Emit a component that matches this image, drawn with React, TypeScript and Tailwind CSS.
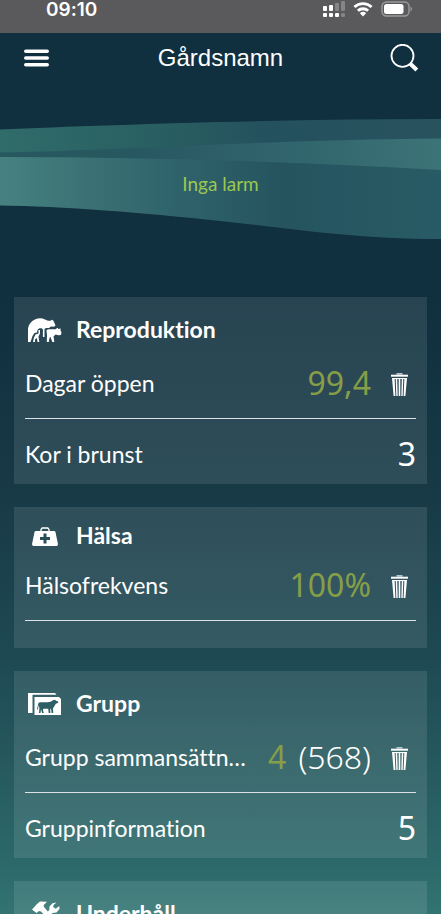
import type { ReactNode } from "react";

function StatusBar() {
  return (
    <div className="flex h-[33px] shrink-0 items-start justify-between bg-[#5a5a5c] pl-[46px] pr-7">
      <span className="font-['Inter',sans-serif] text-[19px] leading-5 font-semibold">09:10</span>
      <div className="flex items-center gap-2 pt-px">
        <svg className="h-4 w-[23px]" viewBox="0 0 23 16" fill="#fff" aria-hidden="true">
          <rect x="1" y="5" width="4" height="5" rx="1" />
          <rect x="7" y="4" width="4" height="6" rx="1" />
          <rect x="13" y="2" width="4" height="8" rx="1" fill="#858587" />
          <rect x="19" y="0" width="4" height="10" rx="1" fill="#858587" />
          <rect x="1" y="12" width="4" height="4" rx="1" />
          <rect x="7" y="12" width="4" height="4" rx="1" />
          <rect x="13" y="12" width="4" height="4" rx="1" />
          <rect x="19" y="12" width="4" height="4" rx="1.5" fill="#858587" />
        </svg>
        <svg className="h-4 w-5" viewBox="0 0 20 16" fill="none" stroke="#fff" strokeWidth="2.8" aria-hidden="true">
          <path d="M1.4 6.1a12.4 12.4 0 0 1 17.2 0" />
          <path d="M4.9 9.8a7.4 7.4 0 0 1 10.2 0" />
          <path d="M10 15.6 6.9 12.3a4.5 4.5 0 0 1 6.2 0z" fill="#fff" stroke="none" />
        </svg>
        <svg className="h-4 w-8" viewBox="0 0 32 16" aria-hidden="true">
          <rect x="1" y="1" width="27" height="14" rx="4.5" fill="none" stroke="#9b9b9d" strokeWidth="1.4" />
          <rect x="3" y="3" width="19.500" height="10" rx="2.500" fill="#fff" />
          <path d="M29.500 5.500c2 .8 2 4.200 0 5z" fill="#9b9b9d" />
        </svg>
      </div>
    </div>
  );
}

function Header() {
  return (
    <header className="flex h-[50px] shrink-0 items-center justify-between pr-[22px] pl-6">
      <button type="button" aria-label="Meny" className="w-[30px]">
        <svg className="h-[18px] w-[25px]" viewBox="0 0 25 18" stroke="#fff" strokeWidth="3.600" strokeLinecap="round">
          <path d="M1.800 2.200h21.400M1.800 9h21.400M1.800 15.800h21.400" />
        </svg>
      </button>
      <h1 className="font-['Liberation_Sans',sans-serif] text-[24px] leading-8">Gårdsnamn</h1>
      <button type="button" aria-label="Sök" className="w-8">
        <svg className="h-7 w-8" viewBox="0 0 32 28" fill="none" stroke="#fff">
          <circle cx="15.500" cy="11.800" r="11" strokeWidth="1.800" />
          <path d="M23 19.500l6.800 6.500" strokeWidth="4" />
        </svg>
      </button>
    </header>
  );
}

function Waves() {
  return (
    <svg className="col-start-1 row-start-1 h-[122px] w-full self-start" viewBox="0 0 441 122" preserveAspectRatio="none" aria-hidden="true">
      <defs>
        <linearGradient id="ridge">
          <stop offset="0" stopColor="#306c6a" />
          <stop offset="0.4" stopColor="#285d60" />
          <stop offset="0.6" stopColor="#24515e" />
          <stop offset="1" stopColor="#28525e" />
        </linearGradient>
        <linearGradient id="sliver">
          <stop offset="0" stopColor="#27585f" />
          <stop offset="0.3" stopColor="#275861" />
          <stop offset="0.55" stopColor="#2f616b" />
          <stop offset="0.75" stopColor="#33686f" />
          <stop offset="1" stopColor="#3d7478" />
        </linearGradient>
        <linearGradient id="swell">
          <stop offset="0" stopColor="#468180" />
          <stop offset="0.2" stopColor="#3b7174" />
          <stop offset="0.4" stopColor="#2f636c" />
          <stop offset="0.64" stopColor="#25545f" />
          <stop offset="1" stopColor="#285b65" />
        </linearGradient>
      </defs>
      <path d="M0 11.500C100 7 280 1 441 1V26L200 33 0 36z" fill="url(#ridge)" />
      <path d="M0 34.500C130 32 260 22 441 20.500V54L200 46 0 42z" fill="url(#sliver)" />
      <path d="M0 39C150 39 300 44 441 52V121C350 121 290 110 220 103 147 95 60 88 0 87.500z" fill="url(#swell)" />
    </svg>
  );
}

function AlarmBanner() {
  return (
    <section className="mt-[35px] grid h-[179px] shrink-0 text-center">
      <Waves />
      <p className="z-10 col-start-1 row-start-1 pt-[52px] text-[19px] leading-7 text-[#9cc751]">Inga larm</p>
    </section>
  );
}

function TrashIcon() {
  return (
    <svg className="h-[23px] w-[17px]" viewBox="0 0 17 23" fill="#fff" aria-hidden="true">
      <path d="M5.500 0h6v1.700h-6z" fill="#b8c5ca" />
      <path d="M0 1.700h17v2H0z" />
      <path d="M1 5h2.600l.8 18H2.600zM4.700 5h1.500l.5 18H5.300zM7.700 5h1.600v18H7.700zM10.800 5h1.500l-.6 18h-1.400zM13.400 5H16l-1.600 18h-1.800z" />
      <path d="M1 5h15v1H1z" />
    </svg>
  );
}

function BreedingIcon() {
  return (
    <svg className="h-6 w-[34px]" viewBox="0 0 34 24" fill="#fff" aria-hidden="true">
      <path d="M0 24V11C.5 6 4 2.500 8 1c3-1.200 6-1 9 .5 2 .9 3.500 1.500 5.500 1.200L24 1.800l1.200.8L26.500 5l1 2.500-1.500 1.200-3-.2-2 1.500H18l-1.500 1V19h-1.600v-7.500C14 9.800 10.500 10 9.500 12L9 14.500 6.500 15l-2 3L2.500 24z" />
      <path d="M5 24l.8-4 1.700-3.500 3-1V12h1.500v3.500l-1.500 3 .8 5.500H9.500L9 20l-2 1.500V24z" />
      <path d="M18.500 12l2-.7h7l2-1.500.9 1.200 2.300-.5-.2 2 1 1.800-.5 2.700-2.500.3-3-.8-2 2 .4 2 .4 3.500h-2l-1.800-5-.7.2-.5 1.800-.5 3h-2l.2-6.500z" />
    </svg>
  );
}

function MedkitIcon() {
  return (
    <svg className="h-[19px] w-[26px]" viewBox="0 0 26 19" aria-hidden="true">
      <path d="M9 5V2.500L10.200 1h5.600L17 2.500V5" fill="none" stroke="#fff" strokeWidth="1.300" />
      <path d="M4 4h18c.8 0 1.300.4 1.500 1.200l2.400 11.500c.2 1.300-.5 2.300-1.900 2.300H2C.6 19-.1 18 .1 16.700L2.500 5.200C2.700 4.400 3.200 4 4 4z" fill="#fff" />
      <path d="M13 6.500v10M8 11.500h10" stroke="#284f5a" strokeWidth="3" />
    </svg>
  );
}

function HerdIcon() {
  return (
    <svg className="h-[22px] w-[33px]" viewBox="0 0 33 22" aria-hidden="true">
      <path d="M0 0h27l1.500 1.800H4.500V20H0z" fill="#fff" />
      <path d="M6.500 4H31l2 2v16H6.500z" fill="#fff" />
      <path d="M10.500 9.700c3-.9 8 .1 12-.9l2.500-1.600 2-.5 1 1 2 .8.3 1.300-2.500 1-1.800 3-1 1.500.2 4.700h-1.600l-.6-4.200-.8.200.2 4h-1.700l-.5-4.300h-4.300l-1 .6.8 3.700h-1.600L13 16.200l-.5 3.800h-1.500l.4-5-.7-3-.8 4.500-.9-.2z" fill="#2f5e66" />
    </svg>
  );
}

function ToolsIcon() {
  return (
    <svg className="h-[26px] w-7" viewBox="0 0 28 26" aria-hidden="true">
      <path d="M0 8.500L5 3l3-2.500 7 .2-3.500 3.600.7 2L24 20l-3 3.500L9 10.500 7 10 4.500 12z" fill="#fff" />
      <path d="M24.500 1.500l-4 .7-3 3.300-.2 3.500L5 20.500 8 24l12.500-12 4-.5 3-3.500-.2-3-3.600 2.800-2.500-1.800.3-2z" fill="#fff" />
    </svg>
  );
}

function CardHeader({ icon, title, compact = false }: { icon: ReactNode; title: string; compact?: boolean }) {
  return (
    <div className={`flex items-center pt-3 ${compact ? "h-11" : "h-13"}`}>
      <span className="flex w-[51px] shrink-0 items-center pt-0.5 pl-[3px]">{icon}</span>
      <h2 className="text-[23px] leading-8 font-bold">{title}</h2>
    </div>
  );
}

function TrackedRow({ label, children }: { label: string; children: ReactNode }) {
  return (
    <div className="flex h-[70px] items-center border-b border-[#dde3e5] pb-0.5">
      <span className="min-w-0 flex-1 truncate text-[23px] leading-8">{label}</span>
      <span className="ml-5 flex gap-3 font-['Noto_Sans',sans-serif] text-[32px] leading-10 font-light">{children}</span>
      <button type="button" aria-label={`Ta bort ${label}`} className="mr-2 ml-5 pt-1">
        <TrashIcon />
      </button>
    </div>
  );
}

function CountRow({ label, value }: { label: string; value: string }) {
  return (
    <div className="flex h-[65px] items-center justify-between pt-1">
      <span className="text-[23px] leading-8">{label}</span>
      <span className="font-['Noto_Sans',sans-serif] text-[32px] leading-10">{value}</span>
    </div>
  );
}

function Card({ children }: { children: ReactNode }) {
  return <section className="shrink-0 bg-white/10 px-[11px]">{children}</section>;
}

export default function App() {
  return (
    <div className="flex h-screen flex-col overflow-hidden bg-linear-[180deg,#102f3f_0%,#102f3f_33%,#173a46_54%,#1e4953_72%,#2c6869_94%,#327472_100%] font-['Lato','Noto_Sans',sans-serif] text-white [font-variant-ligatures:none]">
      <StatusBar />
      <Header />
      <AlarmBanner />
      <main className="flex flex-col gap-[23px] px-3.5">
        <Card>
          <CardHeader icon={<BreedingIcon />} title="Reproduktion" />
          <TrackedRow label="Dagar öppen">
            <span className="font-normal text-[#869e48]">99,4</span>
          </TrackedRow>
          <CountRow label="Kor i brunst" value="3" />
        </Card>
        <Card>
          <CardHeader icon={<span className="pl-1"><MedkitIcon /></span>} title="Hälsa" compact />
          <TrackedRow label="Hälsofrekvens">
            <span className="font-normal text-[#869e48]">100%</span>
          </TrackedRow>
          <div className="h-[27px]" />
        </Card>
        <Card>
          <CardHeader icon={<HerdIcon />} title="Grupp" />
          <TrackedRow label="Grupp sammansättning">
            <span className="font-normal text-[#869e48]">4</span>
            <span>(568)</span>
          </TrackedRow>
          <CountRow label="Gruppinformation" value="5" />
        </Card>
        <Card>
          <CardHeader icon={<span className="pl-1"><ToolsIcon /></span>} title="Underhåll" />
        </Card>
      </main>
    </div>
  );
}
